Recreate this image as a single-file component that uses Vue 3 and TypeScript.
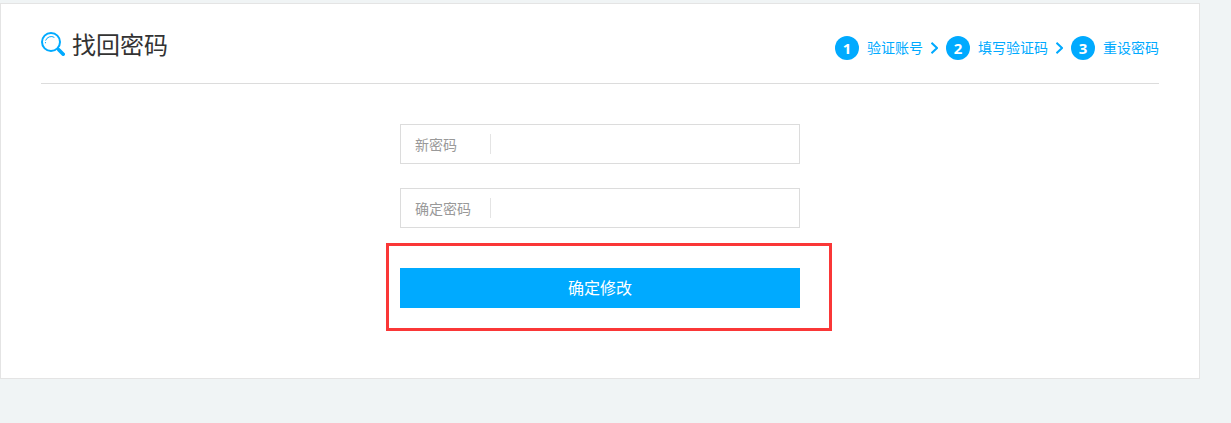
<script setup lang="ts">
import { ref } from 'vue'

interface Field {
  id: string
  label: string
}

const steps: string[] = ['验证账号', '填写验证码', '重设密码']

const fields: Field[] = [
  { id: 'new-password', label: '新密码' },
  { id: 'confirm-password', label: '确定密码' },
]

const values = ref<Record<string, string>>({
  'new-password': '',
  'confirm-password': '',
})
</script>

<template>
  <main class="card">
    <header class="head">
      <h1 class="title">
        <svg class="search" viewBox="0 0 24 24" aria-hidden="true">
          <circle cx="10" cy="10" r="9" fill="none" stroke="#00aaff" stroke-width="2" />
          <path d="M4.6 8.6A6 6 0 0 1 13.4 5.4" fill="none" stroke="#00aaff" stroke-width="1" />
          <circle cx="4.5" cy="10.7" r="0.6" fill="#00aaff" />
          <path d="M16.4 16.4L18 18" stroke="#00aaff" stroke-width="2.4" />
          <path d="M18 18L22.2 22.2" stroke="#00aaff" stroke-width="3.6" stroke-linecap="round" />
        </svg>
        <span>找回密码</span>
      </h1>
      <ol class="steps">
        <li v-for="(step, i) in steps" :key="step" class="step">
          <svg v-if="i > 0" class="chevron" viewBox="0 0 7 12" aria-hidden="true">
            <path d="M0.5 0.8L6 6L0.5 11.2" fill="none" stroke="#00aaff" stroke-width="2" />
          </svg>
          <span class="num">{{ i + 1 }}</span>
          <span class="name">{{ step }}</span>
        </li>
      </ol>
    </header>

    <form class="form" @submit.prevent>
      <div v-for="field in fields" :key="field.id" class="field">
        <label class="label" :for="field.id">{{ field.label }}</label>
        <input :id="field.id" v-model="values[field.id]" class="input" type="password" />
      </div>
      <div class="action">
        <button class="submit" type="submit">确定修改</button>
        <span class="highlight" aria-hidden="true"></span>
      </div>
    </form>
  </main>
</template>

<style>
body {
  background: #f0f4f5;
}
</style>

<style scoped>
.card {
  box-sizing: border-box;
  max-width: 1200px;
  margin-top: 3px;
  padding: 0 40px 70px;
  border: 1px solid #e4e4e4;
  background: #fff;
  font-family: "Noto Sans CJK SC", sans-serif;
  font-size: 14px;
}

.head {
  display: flex;
  justify-content: space-between;
  align-items: flex-start;
  padding: 24px 0 23px;
  border-bottom: 1px solid #dcdcdc;
}

.title {
  display: flex;
  align-items: center;
  gap: 7px;
  margin: 0;
  color: #333;
  font-size: 24px;
  font-weight: 400;
  line-height: 32px;
}

.search {
  width: 24px;
  height: 24px;
}

.steps {
  display: flex;
  gap: 8px;
  margin: 8px 0 0;
  padding: 0;
  list-style: none;
  color: #00aaff;
  line-height: 24px;
}

.step {
  display: flex;
  align-items: center;
  gap: 8px;
}

.name {
  padding-bottom: 2px;
  line-height: 22px;
}

.chevron {
  width: 7px;
  height: 12px;
}

.num {
  width: 24px;
  height: 24px;
  border-radius: 50%;
  background: #00aaff;
  color: #fff;
  font-family: "Open Sans", sans-serif;
  font-size: 15px;
  font-weight: 700;
  text-align: center;
}

.form {
  display: flex;
  flex-direction: column;
  gap: 24px;
  max-width: 400px;
  margin: 40px auto 0;
}

.field {
  display: flex;
  align-items: center;
  box-sizing: border-box;
  height: 40px;
  border: 1px solid #dcdcdc;
}

.label {
  box-sizing: border-box;
  width: 90px;
  padding-left: 14px;
  border-right: 1px solid #e4e4e4;
  color: #999;
  line-height: 20px;
}

.input {
  flex: 1;
  min-width: 0;
  height: 100%;
  padding: 0 12px;
  border: 0;
  outline: 0;
  background: transparent;
  font: inherit;
}

.action {
  position: relative;
  margin-top: 16px;
}

.submit {
  display: block;
  width: 100%;
  height: 40px;
  padding: 0 0 2px;
  border: 0;
  background: #00aaff;
  color: #fff;
  font: inherit;
  font-size: 16px;
  cursor: pointer;
}

.highlight {
  position: absolute;
  inset: -25px -32px -23px -14px;
  border: 3px solid #fa3737;
  pointer-events: none;
}
</style>
